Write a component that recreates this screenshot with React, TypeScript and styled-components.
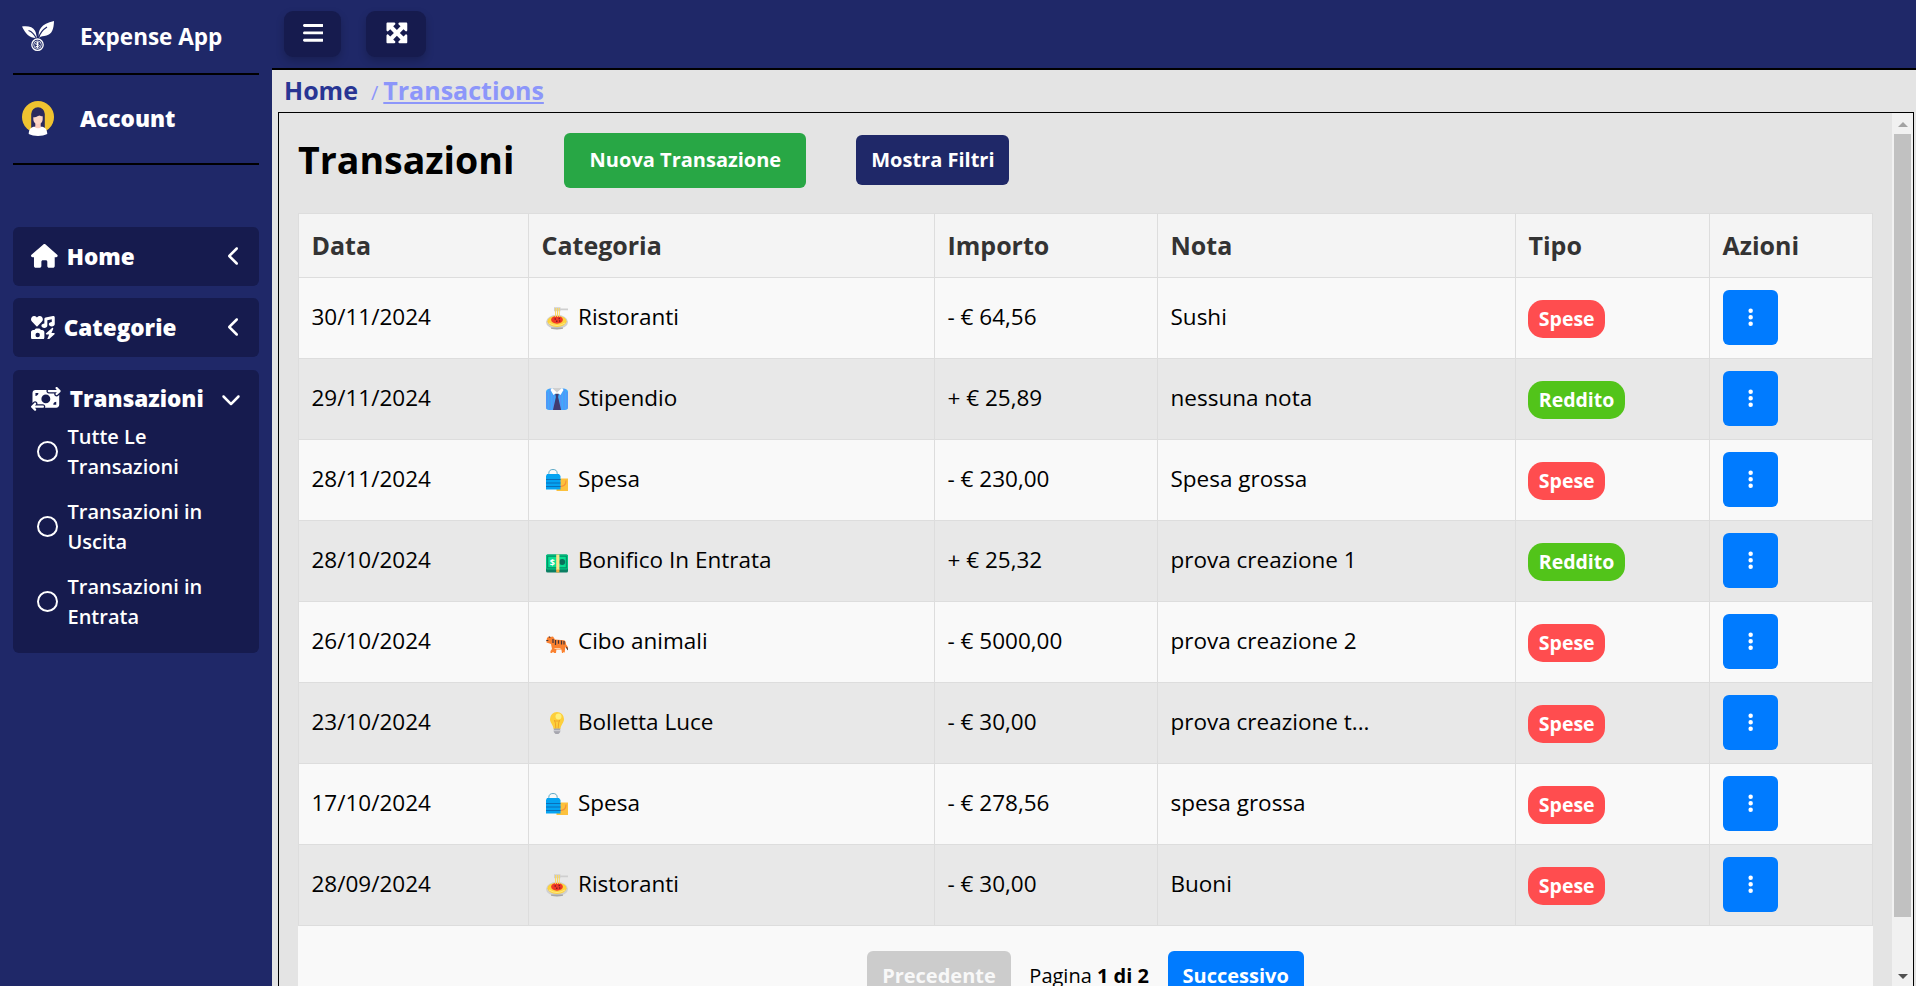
import React from 'react';
import styled, { createGlobalStyle } from 'styled-components';
import {
  FaBars,
  FaChevronDown,
  FaChevronLeft,
  FaEllipsisVertical,
  FaHouse,
  FaIcons,
  FaMaximize,
  FaMoneyBillTransfer,
  FaRegCircle,
} from 'react-icons/fa6';

const GlobalStyle = createGlobalStyle`
  *, *::before, *::after { box-sizing: border-box; }
  body {
    margin: 0;
    overflow: hidden;
    background: #e4e4e4;
    color: #000;
    font-family: "Open Sans", "Liberation Sans", sans-serif;
    font-size: 22.5px;
  }
  button { font-family: inherit; border: 0; cursor: pointer; }
  svg { display: block; flex: none; }
`;

const Shell = styled.div`
  display: flex;
  width: 100vw;
  height: 100vh;
  overflow: hidden;
`;

/* ---------- sidebar ---------- */

const Sidebar = styled.aside`
  flex: none;
  width: 272px;
  padding: 0 13px;
  background: #1f2868;
  color: #fff;
`;

const SidebarHead = styled.div<{ $height: number; $weight: number; $shift: number }>`
  display: flex;
  align-items: center;
  height: ${(p) => p.$height}px;
  padding: 0 0 ${(p) => p.$shift}px 9px;
  border-bottom: 2px solid #000;
  font-weight: ${(p) => p.$weight};
  gap: 26px;
`;

const Menu = styled.nav`
  display: flex;
  flex-direction: column;
  gap: 12.4px;
  padding-top: 62px;
`;

const MenuCard = styled.div`
  border-radius: 6px;
  background: #161b4e;
`;

const MenuTitle = styled.div<{ $iconWidth: number; $arrowWidth: number }>`
  display: flex;
  align-items: center;
  height: 59px;
  padding: 0 18.5px 0.8px 18px;
  font-weight: 800;

  > svg:first-child {
    width: ${(p) => p.$iconWidth}px;
    height: 23.75px;
    margin-right: 9px;
  }
  > svg:last-child {
    width: ${(p) => p.$arrowWidth}px;
    height: 20px;
    margin-left: auto;
  }
`;

const SubList = styled.ul`
  display: flex;
  flex-direction: column;
  gap: 15px;
  margin: -7px 0 0;
  padding: 0 0 21px 24px;
  list-style: none;
`;

const SubItem = styled.li`
  display: flex;
  align-items: center;
  gap: 9.5px;
  font-size: 20px;
  font-weight: 600;
  line-height: 30px;

  > svg { width: 21px; height: 21px; }
  > span { width: 150px; }
`;

/* ---------- main column ---------- */

const Main = styled.main`
  display: flex;
  flex: 1;
  flex-direction: column;
  min-width: 0;
`;

const TopBar = styled.header`
  display: flex;
  flex: none;
  gap: 25px;
  height: 70px;
  padding: 11px 12px 0;
  border-bottom: 2px solid #000;
  background: #1f2868;
`;

const TopButton = styled.button<{ $iconWidth: number }>`
  display: flex;
  align-items: center;
  height: 46px;
  padding: 0 17.6px 2px 18.6px;
  border-radius: 9px;
  background: #161b4e;
  box-shadow: 0 4px 8px rgba(0, 0, 0, 0.2);
  color: #fff;

  > svg { width: ${(p) => p.$iconWidth}px; height: 23.75px; }
`;

const Breadcrumb = styled.div`
  display: flex;
  flex: none;
  align-items: baseline;
  height: 42px;
  padding: 3px 0 0 12px;
  font-size: 25px;
  font-weight: 700;
  line-height: 34px;
  color: #283593;
`;

const Separator = styled.span`
  margin: 0 5px 0 13px;
  font-size: 20px;
  font-weight: 400;
  color: #8c96fa;
`;

const CurrentPage = styled.span`
  color: #8c96fa;
  text-decoration: underline;
  text-decoration-thickness: 2px;
  text-underline-offset: 2px;
`;

const Panel = styled.section`
  display: flex;
  flex: 1;
  min-height: 0;
  margin: 0 2px 0 6px;
  border: 1px solid #000;
  border-bottom: 0;
`;

const PanelBody = styled.div`
  flex: 1;
  min-width: 0;
  padding: 0 19px;
  overflow: hidden;
`;

const PanelHead = styled.div`
  display: flex;
  align-items: center;
  gap: 50px;
  height: 100px;
  padding-bottom: 5px;
`;

const Title = styled.h1`
  margin: 0;
  padding-bottom: 1px;
  font-size: 37.5px;
  font-weight: 700;
  line-height: 50px;
`;

const ActionButton = styled.button<{ $bg: string; $w: number; $h: number }>`
  width: ${(p) => p.$w}px;
  height: ${(p) => p.$h}px;
  padding: 0 0 2px;
  border-radius: 6px;
  background: ${(p) => p.$bg};
  color: #fff;
  font-size: 20px;
  font-weight: 700;

  & + & { margin-bottom: 1px; }
`;

const Table = styled.table`
  width: 1574px;
  table-layout: fixed;
  border-collapse: collapse;
`;

const Col = styled.col<{ $w: number }>`
  width: ${(p) => p.$w}px;
`;

const HeadCell = styled.th`
  height: 64px;
  padding: 0 12.5px 1px;
  border: 1px solid #ddd;
  background: #f4f4f4;
  color: #333;
  font-size: 25px;
  font-weight: 700;
  text-align: left;
`;

const Row = styled.tr`
  background: #f9f9f9;
  &:nth-child(even) { background: #e8e8e8; }
`;

const Cell = styled.td`
  height: 81px;
  padding: 0 12.5px 4px;
  border: 1px solid #ddd;
  line-height: 31px;
`;

const CategoryLabel = styled.div`
  display: flex;
  align-items: center;
  gap: 10px;
  padding-left: 4.5px;

  > svg { margin-top: 4px; }
`;

const Badge = styled.span<{ $income: boolean }>`
  display: block;
  width: fit-content;
  margin: 6px 0 0 -0.5px;
  padding: 0 10.8px 1px;
  border-radius: 15px;
  background: ${(p) => (p.$income ? '#52c41a' : '#ff4d4f')};
  color: #fff;
  font-size: 19.5px;
  font-weight: 700;
  line-height: 37px;
`;

const RowButton = styled.button`
  display: flex;
  align-items: center;
  justify-content: center;
  width: 55px;
  height: 55px;
  margin: 2px 0 0 0.5px;
  border-radius: 6px;
  background: #007bff;
  color: #fff;

  > svg { height: 20.5px; }
`;

const Pagination = styled.div`
  display: flex;
  justify-content: center;
  align-items: center;
  gap: 18.75px;
  height: 102px;
  background: #f9f9f9;
  font-size: 20px;

  > span { padding-bottom: 4px; }
`;

const PageButton = styled.button<{ $off?: boolean }>`
  height: 52px;
  padding: 0 14.8px 3px;
  border-radius: 6px;
  background: ${(p) => (p.$off ? '#ccc' : '#007bff')};
  color: ${(p) => (p.$off ? '#f8f8f8' : '#fff')};
  font-size: 20px;
  font-weight: 700;
`;

/* ---------- scrollbar ---------- */

const Scrollbar = styled.div`
  display: flex;
  flex: none;
  flex-direction: column;
  align-items: center;
  width: 21px;
  background: #f1f1f1;
`;

const ScrollThumb = styled.div`
  width: 17px;
  height: 783px;
  margin-bottom: auto;
  background: #c1c1c1;
`;

const ScrollArrow = styled.div<{ $up?: boolean }>`
  display: flex;
  align-items: center;
  height: 21px;

  &::before {
    content: '';
    margin-top: ${(p) => (p.$up ? 2 : 1)}px;
    border: 5px solid transparent;
    ${(p) => (p.$up ? 'border-top: 0; border-bottom-color: #a3a3a3;' : 'border-bottom: 0; border-top-color: #505050;')}
  }
`;

/* ---------- drawings ---------- */

const Logo = () => (
  <svg width="32" height="31" viewBox="0 0 32 31" fill="none">
    <path d="M0 5.5c6-.8 11 .3 13 4.2 1.200 2.300 1.400 5 2 7.300C8 17.500 3.500 13 0 5.500Z" fill="#fff" />
    <path d="M32 0c-.2 8-2 13-7.500 14.600-3 .8-5.500.4-7.500 2.400-1.500-8 2-14 15-17Z" fill="#fff" />
    <path d="M6.500 9.500c3.500 1 6 4 8.300 8.500M25 6c-4 2.500-7 6-8.500 11" stroke="#1f2868" strokeWidth="1.300" />
    <circle cx="15.500" cy="23.500" r="6.800" fill="#1f2868" />
    <circle cx="15.500" cy="23.700" r="5.700" stroke="#fff" strokeWidth="1.300" />
    <circle cx="15.500" cy="23.700" r="3.800" stroke="#fff" strokeWidth=".8" />
    <path d="M17.300 21.900h-2.700a.9.9 0 0 0 0 1.800h1.800a.9.9 0 0 1 0 1.800h-2.700M15.500 20.500v6.400" stroke="#fff" strokeWidth="1" />
  </svg>
);

const Avatar = () => (
  <svg width="32" height="35" viewBox="0 0 32 35">
    <circle cx="16" cy="16" r="16" fill="#f0c330" />
    <path d="M9.200 27V13a6.800 6.800 0 0 1 13.600 0v14Z" fill="#2b2a5e" />
    <path d="M13.300 20h5.400v5.500l3 1.500-5.700 3-5.700-3 3-1.500Z" fill="#fbcdbd" />
    <path d="M11.300 15.500 20.700 14v4c0 3-2 5-4.700 5s-4.700-2-4.700-5Z" fill="#fcd6c6" />
    <path d="M11 16.300c3 0 4.600-.6 6.200-2.300 1 1 2 1.300 3.800 1.300v-4H11Z" fill="#2b2a5e" />
    <path d="M6.700 33c.2-5 2.600-7.300 6-7.300 1.500 2.100 5.100 2.100 6.600 0 3.400 0 5.800 2.300 6 7.300-5 2.600-13.600 2.600-18.600 0Z" fill="#fff" />
  </svg>
);

type IconName = 'pasta' | 'shirt' | 'bags' | 'money' | 'tiger' | 'bulb';

const drawings: Record<IconName, React.ReactNode> = {
  pasta: (
    <>
      <ellipse cx="11" cy="15" rx="11" ry="7.200" fill="#d0d0d0" />
      <path d="M5 20.500h12v1.200q-6 1.400-12 0Z" fill="#a8a8a8" />
      <ellipse cx="11" cy="14.300" rx="9.600" ry="5.600" fill="#fdd23f" />
      <path d="M3 16q8 5 16 0" stroke="#ffea80" fill="none" />
      <ellipse cx="11" cy="12.800" rx="5.900" ry="3.900" fill="#f03a26" />
      <path d="M8.500 12h1.500M12.500 11.500h1.500M10 14.300h1.500M13 14h1.300" stroke="#8c1c20" strokeWidth="1.400" />
      <path d="M8 .3h6.500v1.200H22v1.800h-7.500v1H8Z" fill="#cfcfcf" />
      <path d="M9.600 1v9M11.500 1v9M13.300 1v9" stroke="#fbd75e" strokeWidth="1" />
    </>
  ),
  shirt: (
    <>
      <path d="M0 4q0-3 4-3.500h14q4 .5 4 3.500v15q0 3-3 3H3q-3 0-3-3Z" fill="#3fa9fb" />
      <path d="M1 4v17M4 1v21M7.200 5v17M14.800 5v17M18 1v21M21 4v17" stroke="#5b8df6" strokeWidth="1.100" />
      <path d="M8 0h6l3 1-6 6-6-6Z" fill="#d0d0d0" />
      <path d="M6 0 4.500 2 7.500 7 11 4.500 14.500 7l3-5L16 0l-5 4.500Z" fill="#fff" />
      <path d="M9.300 6h3.400l-.6 3 3 13H7l2.900-13Z" fill="#413b70" />
    </>
  ),
  bags: (
    <>
      <path d="M10.500 9.500H22V22H10.500Z" fill="#fcc13d" />
      <path d="M13 17.500q7 .5 7-6" stroke="#f5923a" fill="none" strokeWidth="1.200" />
      <path d="M2.800 7V4.500q0-4 4.200-4t4.200 4V7" stroke="#5ea9c6" fill="none" strokeWidth="1" />
      <path d="M1 5h12l1.500 2v13.500H0V7Z" fill="#05a3f2" />
      <path d="M0 10.500h14.500M0 14h14.500M0 17.500h14.500" stroke="#0a6fb9" strokeWidth="1.100" />
    </>
  ),
  money: (
    <>
      <rect y="4.500" width="22" height="18" rx="1.500" fill="#0b7f63" />
      <rect y="4.500" width="22" height="15" rx="1.500" fill="#00c781" />
      <rect x="1.700" y="6.200" width="18.600" height="11.600" stroke="#078664" strokeWidth="1" fill="#08de91" />
      <circle cx="16.200" cy="12" r="3" fill="#09705b" />
      <text x="3.800" y="15.500" fontSize="9" fontWeight="700" fill="#fff">$</text>
      <path d="M10.200 4.500h3.200V20h-3.200Z" fill="#fce38a" />
      <path d="M10.200 19.500h3.200v3h-3.200Z" fill="#f0b042" />
    </>
  ),
  tiger: (
    <>
      <path d="M1 7l1.500-1.500L4 6l3-.5 2 3 9 .8q2 .6 2 4l2 3-.8 2-2-2.300-.5 6H16l-.6-3.500h-5L10 22H4.500v-2L6 18l-1-5-4.500-1.500V9.500Z" fill="#fa8130" />
      <path d="M7 8v4M9.500 9v5M12.500 9.300v3.500M15.500 9.500v4M18 10v3.500" stroke="#45363b" strokeWidth="1.200" />
      <path d="M.3 9.500h2M20.500 16l1.500 3M3 5.800l1.300.7" stroke="#45363b" strokeWidth="1.100" />
      <path d="M8.500 17.500h6M6 21.500h2M17 21.500h2" stroke="#ffd0a8" strokeWidth="1" />
    </>
  ),
  bulb: (
    <>
      <path d="M11 0a7 7 0 0 1 7 7c0 4-3 5.500-3.600 10H7.600C7 12.500 4 11 4 7a7 7 0 0 1 7-7Z" fill="#fdcf3b" />
      <circle cx="12.500" cy="4.500" r="3" fill="#fff07a" />
      <path d="M8.300 8q1.500 2 1.500 8.500M13.700 8q-1.500 2-1.500 8.500M8.500 9h5" stroke="#f0a529" fill="none" />
      <path d="M7.800 16.500h6.400v3.500L12.500 22h-3L7.800 20Z" fill="#a6a6ae" />
      <path d="M7.800 18.700h6.400" stroke="#d2d2d8" />
    </>
  ),
};

const CategoryIcon = ({ name }: { name: IconName }) => (
  <svg width="22" height="23" viewBox="0 0 22 23">
    {drawings[name]}
  </svg>
);

/* ---------- data ---------- */

const columns: [string, number][] = [
  ['Data', 230],
  ['Categoria', 406],
  ['Importo', 223],
  ['Nota', 358],
  ['Tipo', 194],
  ['Azioni', 163],
];

const transactions: { date: string; icon: IconName; category: string; amount: string; note: string; income?: boolean }[] = [
  { date: '30/11/2024', icon: 'pasta', category: 'Ristoranti', amount: '- € 64,56', note: 'Sushi' },
  { date: '29/11/2024', icon: 'shirt', category: 'Stipendio', amount: '+ € 25,89', note: 'nessuna nota', income: true },
  { date: '28/11/2024', icon: 'bags', category: 'Spesa', amount: '- € 230,00', note: 'Spesa grossa' },
  { date: '28/10/2024', icon: 'money', category: 'Bonifico In Entrata', amount: '+ € 25,32', note: 'prova creazione 1', income: true },
  { date: '26/10/2024', icon: 'tiger', category: 'Cibo animali', amount: '- € 5000,00', note: 'prova creazione 2' },
  { date: '23/10/2024', icon: 'bulb', category: 'Bolletta Luce', amount: '- € 30,00', note: 'prova creazione t...' },
  { date: '17/10/2024', icon: 'bags', category: 'Spesa', amount: '- € 278,56', note: 'spesa grossa' },
  { date: '28/09/2024', icon: 'pasta', category: 'Ristoranti', amount: '- € 30,00', note: 'Buoni' },
];

const subItems = ['Tutte Le Transazioni', 'Transazioni in Uscita', 'Transazioni in Entrata'];

export default function App() {
  return (
    <Shell>
      <GlobalStyle />
      <Sidebar>
        <SidebarHead $height={75} $weight={700} $shift={0}>
          <Logo />
          <span>Expense App</span>
        </SidebarHead>
        <SidebarHead $height={90} $weight={800} $shift={1}>
          <Avatar />
          <span>Account</span>
        </SidebarHead>
        <Menu>
          <MenuCard>
            <MenuTitle $iconWidth={26.7} $arrowWidth={12.5}>
              <FaHouse />
              Home
              <FaChevronLeft />
            </MenuTitle>
          </MenuCard>
          <MenuCard>
            <MenuTitle $iconWidth={23.75} $arrowWidth={12.5}>
              <FaIcons />
              Categorie
              <FaChevronLeft />
            </MenuTitle>
          </MenuCard>
          <MenuCard>
            <MenuTitle $iconWidth={29.7} $arrowWidth={20}>
              <FaMoneyBillTransfer />
              Transazioni
              <FaChevronDown />
            </MenuTitle>
            <SubList>
              {subItems.map((label) => (
                <SubItem key={label}>
                  <FaRegCircle />
                  <span>{label}</span>
                </SubItem>
              ))}
            </SubList>
          </MenuCard>
        </Menu>
      </Sidebar>

      <Main>
        <TopBar>
          <TopButton $iconWidth={20.8} aria-label="Menu">
            <FaBars />
          </TopButton>
          <TopButton $iconWidth={23.75} aria-label="Schermo intero">
            <FaMaximize />
          </TopButton>
        </TopBar>
        <Breadcrumb>
          <span>Home</span>
          <Separator>/</Separator>
          <CurrentPage>Transactions</CurrentPage>
        </Breadcrumb>
        <Panel>
          <PanelBody>
            <PanelHead>
              <Title>Transazioni</Title>
              <ActionButton $bg="#28a745" $w={242} $h={55}>Nuova Transazione</ActionButton>
              <ActionButton $bg="#1f2868" $w={153} $h={50}>Mostra Filtri</ActionButton>
            </PanelHead>
            <Table>
              <colgroup>
                {columns.map(([name, width]) => (
                  <Col key={name} $w={width} />
                ))}
              </colgroup>
              <thead>
                <tr>
                  {columns.map(([name]) => (
                    <HeadCell key={name}>{name}</HeadCell>
                  ))}
                </tr>
              </thead>
              <tbody>
                {transactions.map((t) => (
                  <Row key={t.date}>
                    <Cell>{t.date}</Cell>
                    <Cell>
                      <CategoryLabel>
                        <CategoryIcon name={t.icon} />
                        {t.category}
                      </CategoryLabel>
                    </Cell>
                    <Cell>{t.amount}</Cell>
                    <Cell>{t.note}</Cell>
                    <Cell>
                      <Badge $income={!!t.income}>{t.income ? 'Reddito' : 'Spese'}</Badge>
                    </Cell>
                    <Cell>
                      <RowButton aria-label="Azioni">
                        <FaEllipsisVertical />
                      </RowButton>
                    </Cell>
                  </Row>
                ))}
              </tbody>
            </Table>
            <Pagination>
              <PageButton $off>Precedente</PageButton>
              <span>
                Pagina <b>1 di 2</b>
              </span>
              <PageButton>Successivo</PageButton>
            </Pagination>
          </PanelBody>
          <Scrollbar>
            <ScrollArrow $up />
            <ScrollThumb />
            <ScrollArrow />
          </Scrollbar>
        </Panel>
      </Main>
    </Shell>
  );
}
